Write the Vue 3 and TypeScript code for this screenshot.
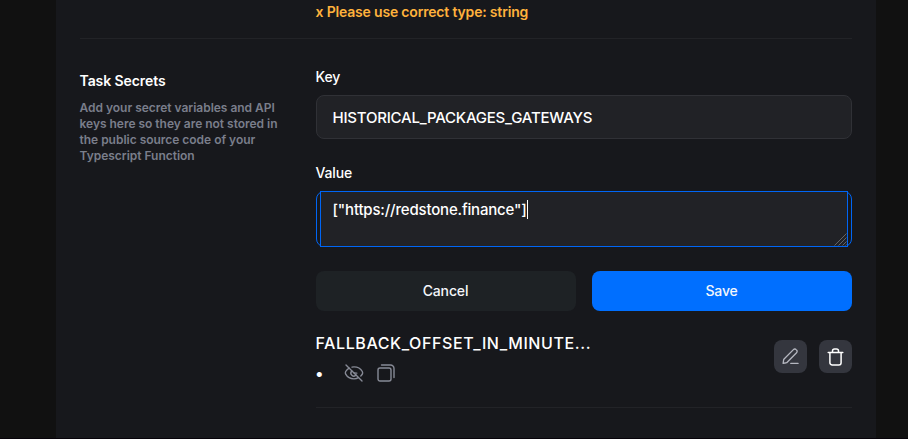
<script setup lang="ts">
import { ref } from 'vue'

interface Secret {
  key: string
  value: string
}

const draft = ref<Secret>({
  key: 'HISTORICAL_PACKAGES_GATEWAYS',
  value: '["https://redstone.finance"]',
})
const secrets = ref<Secret[]>([{ key: 'FALLBACK_OFFSET_IN_MINUTE...', value: '•' }])
</script>

<template>
  <div class="page">
    <main class="panel">
      <section class="args">
        <p class="error"><span>x Please use correct type: string</span></p>
      </section>

      <section class="secrets">
        <aside class="intro">
          <h2><span>Task Secrets</span></h2>
          <p>
            <span>Add your secret variables and API</span><br />
            <span>keys here so they are not stored in</span><br />
            <span>the public source code of your</span><br />
            <span>Typescript Function</span>
          </p>
        </aside>

        <div class="form">
          <div class="label"><span>Key</span></div>
          <div class="input"><span>{{ draft.key }}</span></div>

          <div class="label value-label"><span>Value</span></div>
          <div class="area-frame">
            <div class="area">
              <span class="area-text">{{ draft.value }}</span><i class="caret"></i>
              <svg class="grip" width="13" height="13" viewBox="0 0 13 13">
                <path d="M0.500 12.500 12.500 0.500M4.500 12.500 12.500 4.500M8.500 12.500 12.500 8.500M11.500 12.500 12.500 11.500" />
              </svg>
            </div>
          </div>

          <div class="actions">
            <button class="btn cancel" type="button"><span>Cancel</span></button>
            <button class="btn save" type="button"><span>Save</span></button>
          </div>

          <div v-for="secret in secrets" :key="secret.key" class="row">
            <div class="info">
              <div class="name"><span>{{ secret.key }}</span></div>
              <div class="masked">
                <span class="dot">{{ secret.value }}</span>
                <svg class="icon eye" width="20" height="18" viewBox="0 0 20 18">
                  <path d="M5.100 4.100C3.600 5 2.400 6.200 1.700 7.500c-.5.9-.5 1.800 0 2.700 1.500 2.700 4.900 4.700 8.300 4.700 1.600 0 3.100-.4 4.400-1.200" />
                  <path d="M8 3.100c.7-.2 1.300-.2 2-.2 3.400 0 6.800 1.900 8.300 4.600.5.9.5 1.800 0 2.700-.4.700-.9 1.300-1.500 1.900" />
                  <path d="M7.800 6.900a3 3 0 0 0 4.300 4.200M10 8.900l2.800.2" />
                  <path d="M2 1l16 16" />
                </svg>
                <svg class="icon copy" width="18" height="18" viewBox="0 0 18 18">
                  <rect x="1" y="4" width="13" height="13" rx="2" />
                  <path d="M4.500 1H13.500A3.500 3.500 0 0 1 17 4.500V13.500" />
                </svg>
              </div>
            </div>
            <div class="tools">
              <button class="tool" type="button" aria-label="Edit">
                <svg class="icon pen" width="17" height="17" viewBox="0 0 18 18">
                  <path d="M1.200 16.200l.5-3.500c.1-.4.200-.7.500-1L12.100 1.700a2 2 0 0 1 2.900 0l.4.400a2 2 0 0 1 0 2.900L5.500 15.100c-.3.300-.6.400-1 .5zM9.300 16.300H17" />
                </svg>
              </button>
              <button class="tool" type="button" aria-label="Delete">
                <svg class="icon bin" width="17" height="18" viewBox="0 0 17 18">
                  <path d="M1.200 4.500H15.800M5.500 4.500V3A2 2 0 0 1 7.500 1H9.500A2 2 0 0 1 11.500 3V4.500M2.900 4.500V14.700A2.300 2.300 0 0 0 5.200 17H11.800A2.300 2.300 0 0 0 14.100 14.700V4.500" />
                </svg>
              </button>
            </div>
          </div>
        </div>
      </section>
    </main>
  </div>
</template>

<style>
body {
  background: #111111;
  overflow: hidden;
}
</style>

<style scoped>
* {
  box-sizing: border-box;
}
.page {
  height: 439px;
  overflow: hidden;
  padding-left: 56px;
  background: #111111;
  border-bottom: 1px solid #07030a;
  font-family: Inter, 'Liberation Sans', sans-serif;
  font-size: 14px;
  font-weight: 500;
  text-indent: -0.5px;
  color: #ffffff;
}
.panel {
  width: 820px;
  height: 438px;
  padding: 0 24px;
  background: #17181c;
}
h2,
p {
  margin: 0;
}
.args {
  height: 39px;
  padding: 2px 0 0 236px;
  border-bottom: 1px solid #222327;
}
.error {
  font-weight: 600;
  line-height: 20px;
  letter-spacing: -0.18px;
  color: #ffb23c;
}
.secrets {
  display: flex;
}
.intro {
  width: 236px;
  padding-top: 32px;
}
h2 {
  font-size: 14px;
  line-height: 20px;
  font-weight: 600;
  letter-spacing: -0.08px;
}
.intro p {
  margin: 9px 0 0 -0.5px;
  font-size: 12px;
  line-height: 16px;
  font-weight: 600;
  letter-spacing: -0.02px;
  text-indent: 0;
  color: #7a7e8b;
}
.form {
  width: 536px;
  padding-top: 28px;
}
.label {
  line-height: 20px;
  letter-spacing: -0.15px;
}
.input {
  display: flex;
  align-items: center;
  height: 44px;
  margin-top: 8px;
  padding: 0 16px;
  border: 1px solid #303136;
  border-radius: 8px;
  background: #212226;
  font-size: 15px;
  letter-spacing: -0.22px;
}
.value-label {
  margin-top: 24px;
}
.area-frame {
  height: 56px;
  margin-top: 8px;
  padding: 0 3px;
  border: 1px solid #0066f5;
  border-radius: 8px;
}
.area {
  position: relative;
  display: flex;
  align-items: flex-start;
  height: 56px;
  margin-top: -1px;
  padding: 8px 12px;
  border: 1px solid #0066f5;
  background: #212226;
  font-size: 15px;
  line-height: 19px;
  letter-spacing: -0.18px;
}
.caret {
  width: 1px;
  height: 19px;
  background: #ffffff;
}
.grip {
  position: absolute;
  right: 0;
  bottom: 0;
  fill: none;
  stroke: #74757a;
  stroke-width: 0.8;
}
.actions {
  display: grid;
  grid-template-columns: 1fr 1fr;
  gap: 16px;
  margin-top: 24px;
}
.btn {
  height: 40px;
  padding: 0 1px 2px 0;
  border: 0;
  border-radius: 8px;
  font: inherit;
  letter-spacing: -0.15px;
  color: #f4f6fa;
}
.cancel {
  background: #1e2225;
}
.save {
  background: #006fff;
}
.row {
  display: flex;
  justify-content: space-between;
  height: 97px;
  padding-top: 20px;
  border-bottom: 1px solid #222327;
}
.name {
  font-size: 16px;
  line-height: 24px;
  letter-spacing: 0.6px;
}
.masked {
  display: flex;
  align-items: center;
  height: 18px;
  margin-top: 9px;
}
.dot {
  width: 28px;
  font-size: 16px;
  font-weight: 700;
  line-height: 16px;
}
.icon {
  fill: none;
  stroke: #878a96;
  stroke-width: 1.4;
  stroke-linecap: round;
  stroke-linejoin: round;
}
.copy {
  margin-left: 13px;
}
.tools {
  display: flex;
  gap: 12px;
  padding-top: 9px;
}
.tool {
  display: grid;
  place-items: center;
  width: 33px;
  height: 33px;
  padding: 0;
  border: 0;
  border-radius: 8px;
  background: #34363e;
}
.pen {
  stroke: #b5b7c0;
}
.bin {
  stroke: #ffffff;
  stroke-width: 1.5;
}
</style>
